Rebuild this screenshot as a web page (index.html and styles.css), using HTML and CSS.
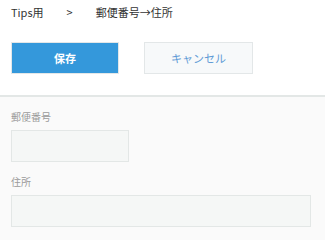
FILE: index.html
```html
<!DOCTYPE html>
<html lang="ja">
<head>
<meta charset="utf-8">
<link rel="stylesheet" href="styles.css">
</head>
<body>
<div class="crumbs">
  <span class="crumb">Tips用</span>
  <span class="sep">&gt;</span>
  <span class="crumb">郵便番号→住所</span>
</div>
<div class="actions">
  <button class="btn btn-save">保存</button>
  <button class="btn btn-cancel">キャンセル</button>
</div>
<div class="form">
  <div class="field">
    <div class="label">郵便番号</div>
    <div class="input input-short"></div>
  </div>
  <div class="field">
    <div class="label">住所</div>
    <div class="input input-long"></div>
  </div>
</div>
</body>
</html>
```
FILE: styles.css
```css
html, body {
  margin: 0;
  padding: 0;
  background: #ffffff;
  font-family: "Noto Sans CJK JP", "Noto Sans", sans-serif;
}
body {
  display: flex;
  flex-direction: column;
  min-height: 100vh;
}
.crumbs {
  display: flex;
  align-items: center;
  height: 24px;
  padding-left: 11px;
  font-size: 11px;
  color: #333333;
  gap: 23px;
}
.crumb, .sep {
  line-height: 24px;
}
.actions {
  display: flex;
  gap: 25px;
  padding: 18px 0 0 11px;
  height: 71px;
  box-sizing: border-box;
}
.btn {
  box-sizing: border-box;
  width: 108px;
  height: 32px;
  border: 1px solid #e3e7e8;
  font-family: "Noto Sans CJK JP", "Noto Sans", sans-serif;
  font-size: 11px;
  padding: 0;
  margin: 0;
}
.btn-save {
  background: #3498db;
  color: #ffffff;
  font-weight: bold;
}
.btn-cancel {
  width: 109px;
  background: #f7f9fa;
  color: #5f9bd6;
}
.form {
  flex: 1;
  border-top: 2px solid #e3e7e6;
  background: #fafafa;
  padding: 12px 0 0 11px;
  box-sizing: border-box;
}
.field {
  display: flex;
  flex-direction: column;
  margin-bottom: 12px;
}
.label {
  font-size: 10px;
  line-height: 16px;
  color: #9a9a9a;
  margin-bottom: 5px;
}
.input {
  box-sizing: border-box;
  height: 32px;
  background: #f5f7f6;
  border: 1px solid #e3e7e6;
}
.input-short { width: 118px; }
.input-long { width: 300px; }
```
